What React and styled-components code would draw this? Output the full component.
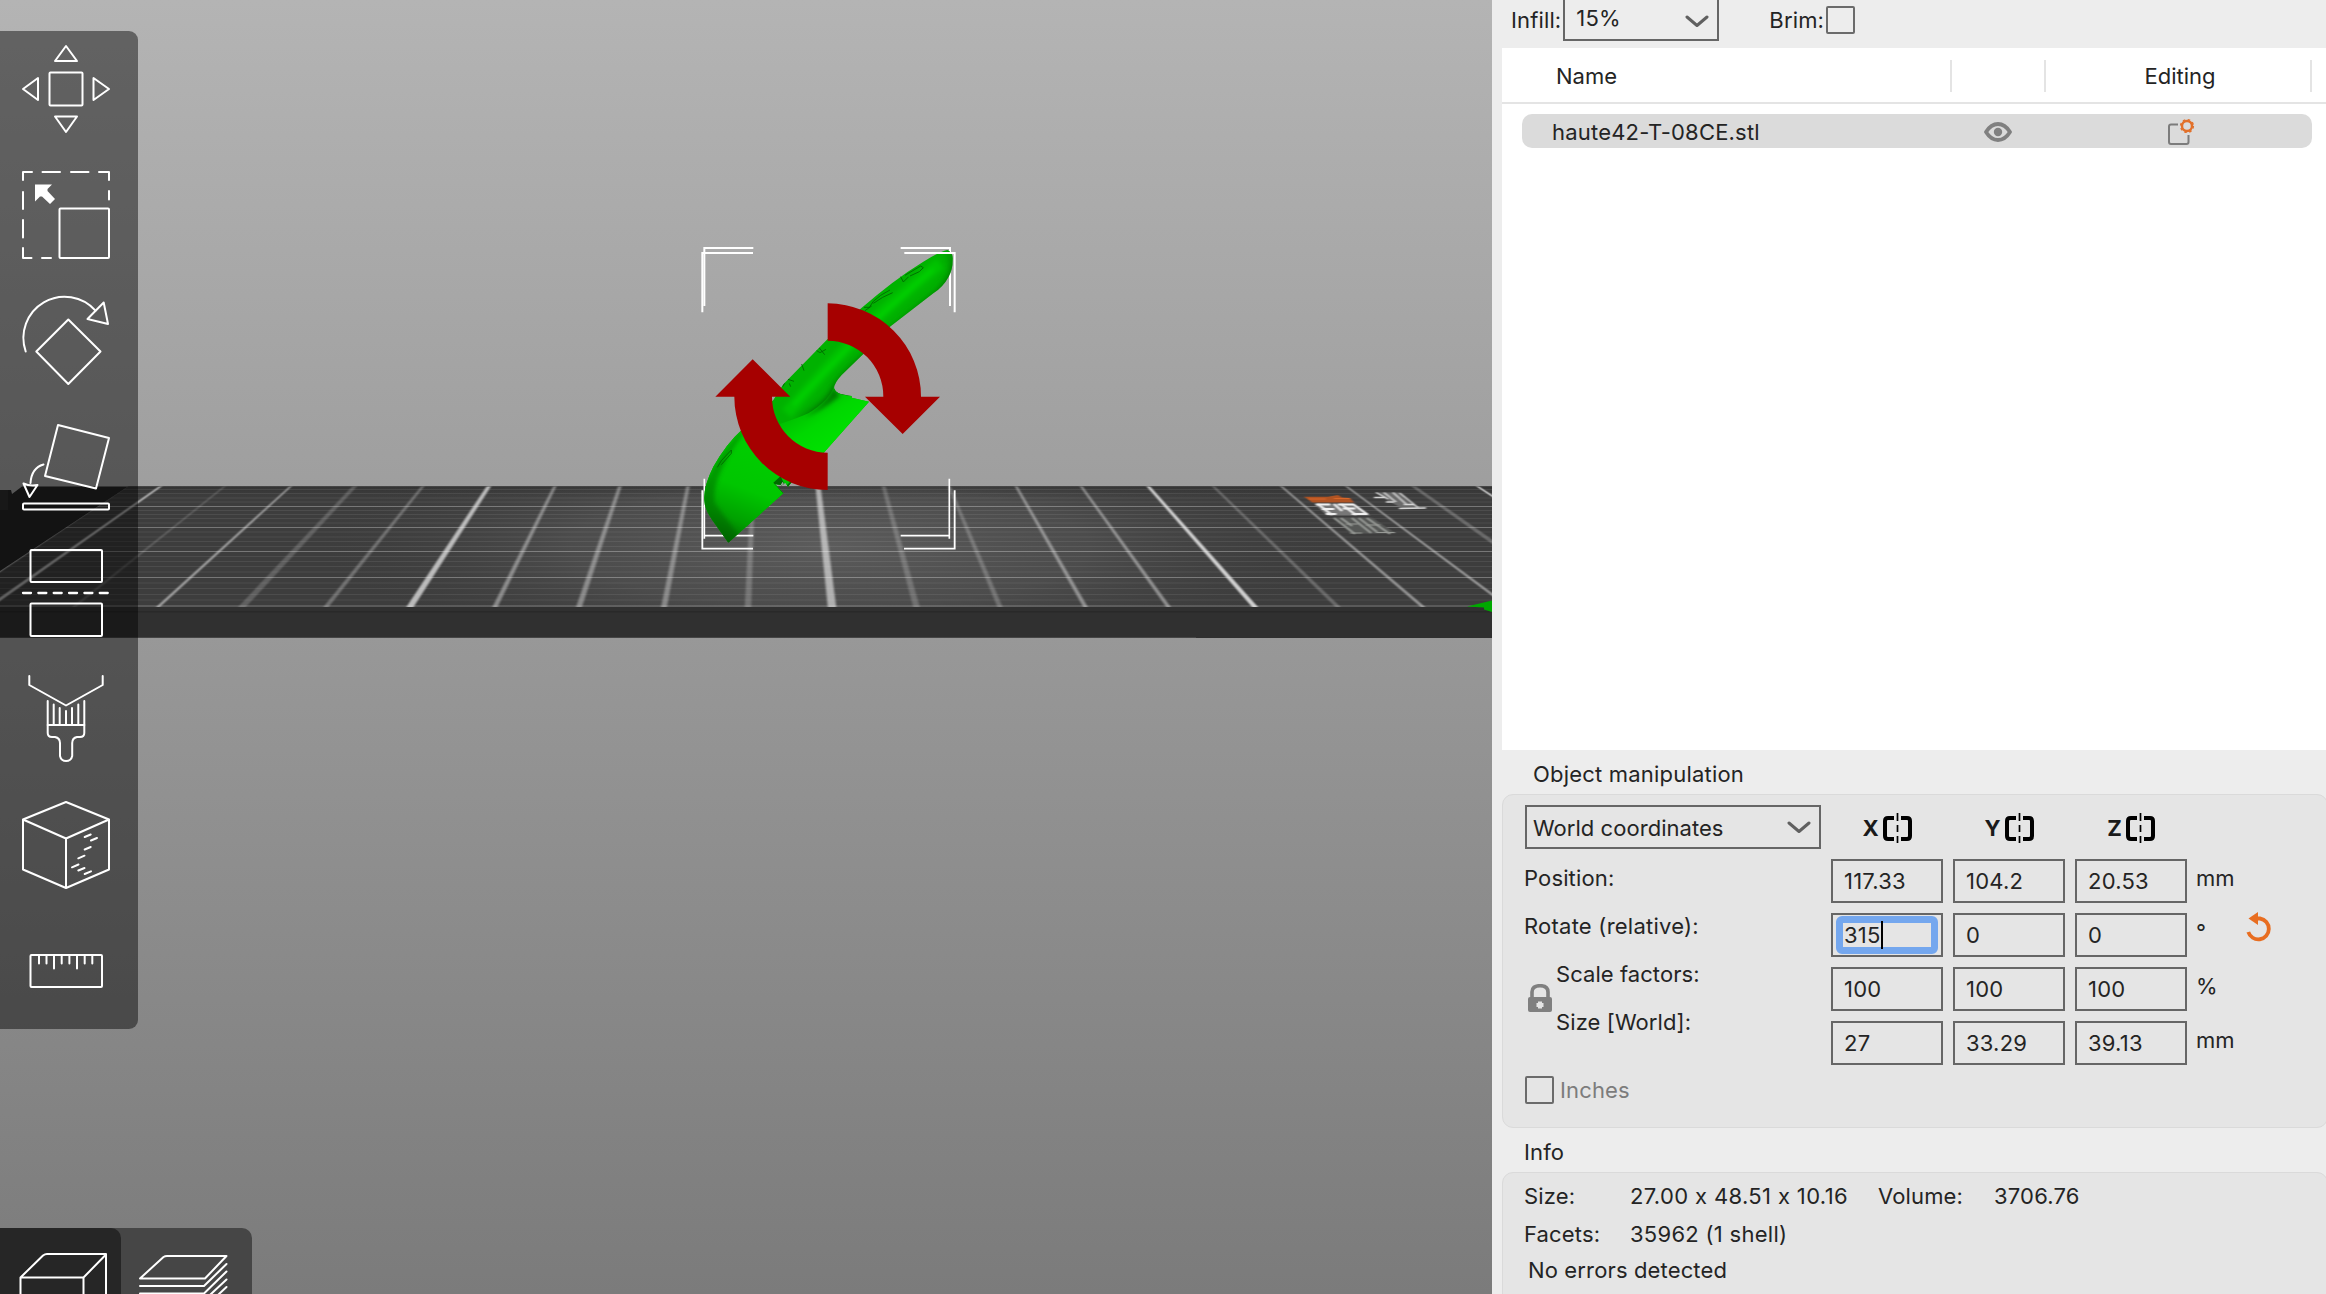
import React from "react";
import styled, { createGlobalStyle, css } from "styled-components";

const Global = createGlobalStyle`
  *, *::before, *::after { box-sizing: border-box; }
  html, body { margin: 0; padding: 0; background: #ededed; }
  body { font-family: Inter, "Liberation Sans", sans-serif; font-size: 22px; line-height: 28px; color: #242424; overflow: hidden; font-feature-settings: "calt" 0; }
`;

const Window = styled.div`
  display: flex;
  width: 2326px;
  height: 1294px;
  overflow: hidden;
`;

/* ---------- 3D viewport ---------- */

const Viewport = styled.section`
  position: relative;
  width: 1492px;
  height: 1294px;
  flex: none;
  background: linear-gradient(#b4b4b4, #7b7b7b);
`;

const SceneSvg = styled.svg`
  display: block;
  width: 1492px;
  height: 1294px;
`;

const Toolbar = styled.nav`
  position: absolute;
  left: 0;
  top: 31px;
  width: 138px;
  height: 998px;
  padding: 14px 0 0 22px;
  display: flex;
  flex-direction: column;
  gap: 38px;
  background: rgba(0, 0, 0, 0.45);
  border-radius: 0 9px 9px 0;
`;

const ToolIcon = styled.svg`
  display: block;
  flex: none;
  width: 88px;
  height: 88px;
  overflow: visible;
  fill: none;
  stroke: #fff;
  stroke-width: 2;
  stroke-linecap: round;
  stroke-linejoin: round;
`;

const ViewTabs = styled.nav`
  position: absolute;
  left: 0;
  top: 1228px;
  width: 252px;
  height: 66px;
  display: flex;
  overflow: hidden;
  background: #464646;
  border-radius: 0 10px 0 0;
`;

const ViewTab = styled.div`
  width: ${(p) => (p.$active ? 121 : 131)}px;
  height: 66px;
  border-radius: 0 10px 0 0;
  background: ${(p) => (p.$active ? "#262626" : "transparent")};
  svg {
    display: block;
    fill: none;
    stroke: #fff;
    stroke-width: 2;
    stroke-linecap: round;
    stroke-linejoin: round;
  }
`;

const mainLines = [
  [127, -53, 2, 0.6], [161, -11, 4, 0.58], [225, 74, 3, 0.16], [291, 158, 3, 0.48],
  [355, 242, 6, 0.18], [423, 326, 4, 0.26], [489, 410, 5.5, 0.64], [555, 495, 4, 0.38],
  [620, 579, 4.5, 0.36], [688, 664, 4.5, 0.34], [753, 748, 5, 0.22], [818, 832, 6.5, 0.55],
  [883.5, 916.5, 5, 0.2], [949, 1000, 4, 0.22], [1016, 1085.5, 3.5, 0.4],
  [1081, 1168.5, 3.5, 0.4], [1148, 1255, 4.5, 0.74], [1213, 1338, 4, 0.22],
  [1281, 1423, 3.5, 0.42], [1346, 1509, 3.5, 0.42], [1413, 1585, 6, 0.22], [1477, 1660, 3, 0.85],
];

const crossLines = [506.5, 527.5, 551.5, 577.5, 606];
const faintLines = [
  489.5, 493.5, 498, 502, 510.5, 514.5, 518.5, 523, 532, 537, 541.5, 546.5,
  556.5, 561.5, 566.5, 572, 583, 588.5, 594.5, 600,
];

function Bed() {
  return (
    <g>
      <polygon points="0,490 11,490 12,494 22,486.5 1492,486.5 1492,638 0,638" fill="#232323" />
      <rect x="0" y="490" width="8" height="20" fill="#2c2c2c" />
      <g clipPath="url(#bedClip)">
        <rect x="0" y="486" width="1492" height="121" fill="#3d3d3d" />
        <rect x="0" y="486" width="1492" height="121" fill="url(#bedGlow)" />
        <rect x="0" y="486" width="1492" height="12" fill="url(#farEdge)" />
        {faintLines.map((y) => (
          <line key={y} x1="0" x2="1492" y1={y} y2={y} stroke="#fff" strokeOpacity="0.08" strokeWidth="1.2" />
        ))}
        {crossLines.map((y) => (
          <line key={y} x1="0" x2="1492" y1={y} y2={y} stroke="#fff" strokeOpacity="0.3" strokeWidth="1.1" />
        ))}
        {mainLines.map(([a, b, w, o]) => (
          <polygon
            key={a}
            filter="url(#soft)"
            points={`${a - w * 0.4},486 ${a + w * 0.4},486 ${b + w * 0.65},607 ${b - w * 0.65},607`}
            fill="#fff"
            fillOpacity={o}
          />
        ))}
      </g>
      <rect x="0" y="607" width="1492" height="31" fill="#303030" />
      <rect x="0" y="611" width="1492" height="1.5" fill="#292929" />
      <rect x="0" y="637" width="1196" height="1" fill="#464646" />
      <g filter="url(#tiny)">
        <path d="M1304 496.800H1328L1338 495L1342 497.500L1350 498L1354 502.500H1312L1309 500Z" fill="#b05223" />
        <path d="M1308 499H1326M1334 498.500H1350" stroke="#d9672b" strokeWidth="1.200" />
        <path d="M1314 503.500H1354L1370 515.500H1327Z" fill="#777" />
        <g stroke="#f0f0f0" strokeWidth="2">
          <path d="M1316 504.500H1330M1338 504.500H1353M1322 509H1334M1343 508.500H1355M1326 514H1336M1352 514H1368" />
          <path d="M1318 504L1332 515M1334 504L1342 511M1341 504L1356 515M1353 504L1367 514" />
        </g>
        <path d="M1333 517.500H1372L1396 533.500H1351Z" fill="#565856" />
        <g stroke="#979a96" strokeWidth="1.600">
          <path d="M1334 518L1355 534M1341 518L1352 526M1352 518L1371 533M1359 518L1377 532M1367 518L1390 534" />
          <path d="M1350 533H1362M1376 532.500H1395M1346 524H1358M1366 525H1380" strokeWidth="1.200" />
        </g>
        <path d="M1376 492.500H1400L1409 502L1421 508.500H1403L1388 501Z" fill="#6a6a6a" />
        <g stroke="#d4d4d4" strokeWidth="1.400">
          <path d="M1376 492.500L1388 499M1384 492.500L1396 502M1393 492.500L1406 504M1400 493L1418 507.500M1399 508.500L1426 508M1374 497.500H1384M1386 502H1394M1404 504.500H1414" />
        </g>
      </g>
      <path d="M1467 606.500L1492 600.500V612L1484 609.500V607.500Z" fill="#00a900" />
    </g>
  );
}

function Model() {
  return (
    <g transform="translate(660 220) scale(0.33333)">
      <g fill="none" stroke="#fff" strokeWidth="6">
        <path d="M280 84H133V258" />
        <path d="M722 84H870V258" />
        <path d="M133 776V956M133 947H280" strokeWidth="5" />
        <path d="M868 776V956M868 947H722" strokeWidth="5" />
      </g>
      <g clipPath="url(#modelClip)">
        <rect x="100" y="60" width="800" height="920" fill="#00b200" />
        <g filter="url(#blur14)" fill="none">
          <path d="M905 130Q890 184 852 228L702 350L622 428Q550 490 532 528L460 600" stroke="#004d00" strokeWidth="38" />
          <path d="M530 520Q480 565 420 606" stroke="#007800" strokeWidth="16" />
          <path d="M864 88Q889 110 879 170" stroke="#006a00" strokeWidth="12" />
        </g>
        <g filter="url(#blur8)" fill="none">
          <path d="M840 130Q740 210 645 295L510 435L380 580" stroke="#00c200" strokeWidth="36" />
          <path d="M820 148Q710 240 610 335L490 460L400 555" stroke="#08d608" strokeWidth="8" />
        </g>
        <path d="M522 498Q528 525 575 528L640 545L490 720L380 680L360 612Q420 592 445 580Q510 540 522 498Z" fill="url(#fin)" />
        <path d="M520 500Q500 550 432 592Q480 575 540 528Z" fill="#007c00" filter="url(#blur8)" />
        <path d="M100 1000V620L245 620L300 700L400 790L370 822L205 980Z" fill="url(#head)" />
        <path d="M245 630Q150 740 133 800L120 860L205 980L240 950L165 850Q150 780 250 640Z" fill="#005500" fillOpacity="0.400" filter="url(#blur8)" />
        <path d="M340 788L362 768L376 800L396 780L400 800L378 830Z" fill="#006a00" />
        <path d="M362 795L368 785L374 798Z" fill="#a0a0a0" />
      </g>
      <g fill="none" stroke="#006400" strokeWidth="3" strokeOpacity="0.850">
        <path d="M722 170L730 186L746 170M735 166L782 138L790 143L778 155L750 168" />
        <path d="M612 262L628 262L640 244L662 226L690 210M640 250L668 232L698 218M615 272L635 258" />
        <path d="M470 392L480 398L498 388M478 384L494 404M425 432L432 452M384 478L402 484M388 490L392 500M368 500L374 490" />
        <path d="M172 742L184 722L214 690L214 700L184 734" />
      </g>
      <g fill="#a60000">
        <path d="M503 250A280 280 0 0 1 783 530H840L728 642L615 530H670A167 167 0 0 0 503 362Z" />
        <path d="M503 810A280 280 0 0 1 223 530H166L278 418L391 530H336A167 167 0 0 0 503 698Z" />
      </g>
      <g fill="none" stroke="#fff" strokeWidth="6">
        <path d="M279 99H127V277" />
        <path d="M733 99H884V277" />
        <path d="M127 811V986H279" strokeWidth="5.500" />
        <path d="M884 811V986H732" strokeWidth="5.500" />
      </g>
    </g>
  );
}

function Scene() {
  return (
    <SceneSvg viewBox="0 0 1492 1294">
      <defs>
        <clipPath id="bedClip">
          <polygon points="128,486.500 1492,486.500 1492,607 0,607 0,571" />
        </clipPath>
        <clipPath id="modelClip">
          <path d="M862 90Q880 98 878 120Q878 150 866 170Q850 200 820 220L690 320L610 402L545 465Q522 490 522 505Q528 520 545 523L575 528V533L627 545L490 700L400 780L384 800L376 788L366 796L345 792L370 820L205 968L155 898Q133 865 133 840Q130 800 160 740Q200 670 245 630L340 540L370 493L500 360L600 268Q700 180 790 125Q840 94 862 90Z" />
        </clipPath>
        <radialGradient id="bedGlow" gradientUnits="userSpaceOnUse" cx="0" cy="0" r="1" gradientTransform="translate(830 546) scale(520 120)">
          <stop offset="0" stopColor="#5c5c5c" />
          <stop offset="0.500" stopColor="#565656" stopOpacity="0.600" />
          <stop offset="1" stopColor="#3d3d3d" stopOpacity="0" />
        </radialGradient>
        <linearGradient id="farEdge" x1="0" y1="0" x2="0" y2="1">
          <stop offset="0" stopColor="#222" stopOpacity="0.400" />
          <stop offset="1" stopColor="#333" stopOpacity="0" />
        </linearGradient>
        <linearGradient id="fin" gradientUnits="userSpaceOnUse" x1="420" y1="560" x2="500" y2="680">
          <stop offset="0" stopColor="#00bd00" />
          <stop offset="0.500" stopColor="#00d800" />
          <stop offset="1" stopColor="#00e000" />
        </linearGradient>
        <linearGradient id="head" gradientUnits="userSpaceOnUse" x1="290" y1="700" x2="190" y2="960">
          <stop offset="0" stopColor="#00cc00" />
          <stop offset="0.400" stopColor="#00c600" />
          <stop offset="0.750" stopColor="#00a000" />
          <stop offset="1" stopColor="#006c00" />
        </linearGradient>
        <filter id="soft" x="-20%" y="-5%" width="140%" height="110%">
          <feGaussianBlur stdDeviation="1 0" />
        </filter>
        <filter id="tiny"><feGaussianBlur stdDeviation="0.900 0.450" /></filter>
        <filter id="blur14" x="-30%" y="-30%" width="160%" height="160%"><feGaussianBlur stdDeviation="13" /></filter>
        <filter id="blur8" x="-30%" y="-30%" width="160%" height="160%"><feGaussianBlur stdDeviation="6" /></filter>
      </defs>
      <Bed />
      <Model />
    </SceneSvg>
  );
}

const MoveIcon = () => (
  <ToolIcon viewBox="0 0 88 88">
    <path d="M44 1L55 16H33ZM44 87L33 71.500H55ZM1 44L16 33V55ZM87 44L71.500 33V55Z" />
    <rect x="27.500" y="27.500" width="33" height="33" rx="1" />
  </ToolIcon>
);

const ScaleIcon = () => (
  <ToolIcon viewBox="0 0 88 88">
    <path d="M1 9V1H10M20.500 1H38M49 1H66.500M77 1H87V9M87 20V28.500M1 21V38M1 49V66.500M1 77V87H9.500M20 87H29" />
    <rect x="37.500" y="37.500" width="49.500" height="49.500" rx="1" />
    <path d="M13 13.500H30L25.500 18V20L33 28L28 33L20 25.500H18L13 30.500Z" fill="#fff" stroke="none" />
  </ToolIcon>
);

const RotateIcon = () => (
  <ToolIcon viewBox="0 0 88 88">
    <path d="M3.700 54.500A41.200 41.200 0 0 1 73.500 13.700" />
    <path d="M81.700 5.500L65.500 22L86 27ZM46.300 22.500L78.500 54.500L46.300 87L14.300 54.500Z" />
  </ToolIcon>
);

const PlaceIcon = () => (
  <ToolIcon viewBox="0 0 88 88">
    <path d="M36 2L87 15L74 65.500L23 53ZM21.500 41.500Q9.500 45 8.500 60M1.500 60.500Q8 63.500 15.500 62L7.500 74Z" />
    <rect x="1" y="80.500" width="86" height="6" rx="1" />
  </ToolIcon>
);

const CutIcon = () => (
  <ToolIcon viewBox="0 0 88 88">
    <rect x="8.500" y="1" width="71.500" height="32" rx="1" />
    <rect x="8.500" y="54.500" width="71.500" height="32.500" rx="1" />
    <path d="M1 44H87" strokeWidth="2.300" strokeDasharray="8 7.350" />
  </ToolIcon>
);

const PaintIcon = () => (
  <ToolIcon viewBox="0 0 88 88">
    <path d="M7.300 1V10L44 30.500L80.700 10V1" />
    <path d="M31.700 29.500V49M37.700 33V49M44 36V49M50 33V49M56.300 29.500V49M25.700 50H62.300" />
    <path d="M25.700 26V58Q25.700 62 30 62H33Q38 63 38 68V81A6.200 6.200 0 0 0 50.200 81V68Q50.200 63 55 62H58Q62.300 62 62.300 58V26" />
  </ToolIcon>
);

const SeamIcon = () => (
  <ToolIcon viewBox="0 0 88 88">
    <path d="M44 1L87 18.500V68.500L44 87L1 68.500V18.500ZM1 18.500L44 37.500L87 18.500M44 37.500V87" />
    <path d="M62.700 36L68.700 33.500M69 39.500L75 37M62.700 48.500L68.700 46M56.300 57.300L62.500 54.700M50 66.300L56.500 63.500M56.300 69.500L62.500 67M62.700 73L69 70.300" />
  </ToolIcon>
);

const MeasureIcon = () => (
  <ToolIcon viewBox="0 0 88 88">
    <rect x="8.500" y="28" width="71.500" height="32" rx="1" />
    <path d="M17 28V36.500M24.500 28V36.500M32 28V41.500M39.700 28V36.500M47.400 28V36.500M55 28V41.500M62.700 28V36.500M70.300 28V36.500" />
  </ToolIcon>
);

/* ---------- side panel ---------- */

const Panel = styled.aside`
  width: 834px;
  height: 1294px;
  padding-left: 10px;
  display: flex;
  flex-direction: column;
  background: #ededed;
`;

const Label = styled.span`
  white-space: pre;
  letter-spacing: ${(p) => p.$track ?? 0.14}px;
  ${(p) => p.$w && css`width: ${p.$w}px;`}
  ${(p) => p.$muted && css`color: #7c7c7c;`}
`;

const OptionsBar = styled.div`
  display: flex;
  align-items: flex-start;
  height: 48px;
  padding: 6px 0 0 9px;
  flex: none;
`;

const Combo = styled.div`
  display: flex;
  align-items: center;
  justify-content: space-between;
  height: 44px;
  width: ${(p) => p.$w}px;
  padding: 1px 8px 0 ${(p) => p.$pad}px;
  border: 2px solid #666;
  color: #242424;
`;

const InfillCombo = styled(Combo)`
  margin: -9px 50px 0 2px;
  padding-top: 0;
  padding-bottom: 2px;
  svg { margin-top: 6px; }
`;

const Chevron = () => (
  <svg width="24" height="13" viewBox="0 0 24 13" fill="none" stroke="#606060" strokeWidth="3" strokeLinecap="round" strokeLinejoin="round">
    <path d="M2 2L12 10.500L22 2" />
  </svg>
);

const CheckBox = styled.span`
  width: 29px;
  height: 28px;
  flex: none;
  border: 2px solid #6b6b6b;
  border-radius: 2px;
`;

const BrimCheckBox = styled(CheckBox)`
  margin-left: 2px;
`;

const ObjectList = styled.div`
  height: 702px;
  flex: none;
  background: #fff;
`;

const ListHeader = styled.div`
  display: grid;
  grid-template-columns: 450px 94px 266px;
  align-items: center;
  height: 56px;
  border-bottom: 2px solid #e4e4e4;
`;

const HeaderCell = styled.div`
  height: 32px;
  margin-top: 1px;
  padding-top: 2px;
  padding-left: ${(p) => p.$pad || 0}px;
  text-align: ${(p) => p.$align || "left"};
  border-right: 2px solid #e4e4e4;
`;

const ListRow = styled.div`
  display: grid;
  grid-template-columns: 432px 183px 1fr;
  align-items: center;
  height: 34px;
  margin: 10px 14px 0 20px;
  padding: 2px 0 0 30px;
  background: #dbdbdb;
  border-radius: 10px;
  svg { display: block; }
`;

const SectionTitle = styled.div`
  height: 44px;
  flex: none;
  padding: 10px 0 0 ${(p) => p.$pad}px;
`;

const Group = styled.div`
  flex: none;
  width: 826px;
  border: 1px solid #dadada;
  border-radius: 11px;
  background: #e5e5e5;
`;

const ManipGroup = styled(Group)`
  display: flex;
  height: 334px;
  padding: 10px 0 0 22px;
`;

const LabelColumn = styled.div`
  width: 306px;
  display: flex;
  flex-direction: column;
`;

const LabelRow = styled.div`
  height: 48px;
  line-height: 48px;
`;

const LabelStack = styled.div`
  margin: 5px 0 0 -1px;
`;

const LockedPair = styled.div`
  display: flex;
  align-items: center;
  gap: 4px;
  padding-left: 4px;
  svg { display: block; }
`;

const InchesRow = styled.div`
  display: flex;
  align-items: center;
  gap: 6px;
  height: 28px;
  margin: 30px 0 0 0;
`;

const FieldGrid = styled.div`
  display: grid;
  grid-template-columns: 112px 112px 112px 39px 26px;
  grid-auto-rows: 44px;
  column-gap: 10px;
  row-gap: 10px;
  align-content: start;
`;

const AxisHead = styled.div`
  display: flex;
  align-items: center;
  justify-content: center;
  gap: 4px;
  line-height: 44px;
  padding-top: 1px;
  color: #1a1a1a;
  font-weight: 700;
`;

const Field = styled.div`
  height: 44px;
  padding-left: 11px;
  border: 2px solid #666;
  line-height: 40px;
  letter-spacing: 0.22px;
  white-space: pre;
`;

const FocusedField = styled(Field)`
  padding: 1px 3px;
`;

const FocusRing = styled.div`
  display: flex;
  align-items: center;
  height: 38px;
  padding: 0 0 1px 1px;
  border: 7px solid #74a7ee;
  border-radius: 6px;
`;

const Caret = styled.span`
  width: 2px;
  height: 28px;
  background: #000;
`;

const Unit = styled.div`
  line-height: 38px;
  margin-left: -1px;
`;

const UndoSlot = styled.div`
  svg { display: block; margin-top: -1px; }
`;

const InfoGroup = styled(Group)`
  height: 140px;
  padding: 8px 0 0 21px;
`;

const InfoRow = styled.div`
  display: flex;
  height: ${(p) => p.$h || 37.5}px;
  line-height: 30px;
  padding-left: ${(p) => p.$pad || 0}px;
`;

const EyeIcon = () => (
  <svg width="28" height="20" viewBox="0 0 28 20" fill="none">
    <path d="M2 10Q7 2 14 2T26 10Q21 18 14 18T2 10Z" stroke="#808080" strokeWidth="3.800" strokeLinejoin="round" />
    <circle cx="14" cy="10" r="4.200" fill="#808080" />
  </svg>
);

const EditIcon = () => (
  <svg width="28" height="28" viewBox="0 0 28 28" fill="none">
    <path d="M11 6.500H4Q2 6.500 2 8.500V24Q2 26 4 26H19.500Q21.500 26 21.500 24V17" stroke="#7c7c7c" strokeWidth="2" />
    <circle cx="20" cy="8" r="5" stroke="#e2702a" strokeWidth="2.400" />
    <circle cx="20" cy="8" r="6.400" stroke="#e2702a" strokeWidth="1.400" strokeDasharray="2.500 2.526" />
  </svg>
);

const MirrorIcon = () => (
  <svg width="29" height="30" viewBox="0 0 29 30" fill="none" stroke="#000">
    <path d="M11 5H5Q2 5 2 8V23Q2 26 5 26H11M18 5H24Q27 5 27 8V23Q27 26 24 26H18" strokeWidth="4" />
    <path d="M14.500 0V8M14.500 12V19M14.500 23V30" strokeWidth="1.700" />
  </svg>
);

const LockIcon = () => (
  <svg width="24" height="28" viewBox="0 0 24 28">
    <path d="M4 15V8Q4 1.700 12 1.700T20 8V15" fill="none" stroke="#808080" strokeWidth="3.600" />
    <rect x="0" y="13" width="24" height="15" rx="2" fill="#808080" />
    <path d="M12 17.500V24.500M8.500 21H15.500" stroke="#e5e5e5" strokeWidth="4" />
  </svg>
);

const UndoIcon = () => (
  <svg width="26" height="31" viewBox="0 0 26 31" fill="none">
    <path d="M8 6.500H14A10.500 10.500 0 1 1 2.300 20" stroke="#e86d20" strokeWidth="3.800" />
    <path d="M12 0V13L2.500 6.500Z" fill="#e86d20" />
  </svg>
);

function Fields({ values }) {
  return values.map((v, i) => <Field key={i}>{v}</Field>);
}

export default function App() {
  return (
    <>
      <Global />
      <Window>
        <Viewport>
          <Scene />
          <Toolbar>
            <MoveIcon />
            <ScaleIcon />
            <RotateIcon />
            <PlaceIcon />
            <CutIcon />
            <PaintIcon />
            <SeamIcon />
            <MeasureIcon />
          </Toolbar>
          <ViewTabs>
            <ViewTab $active>
              <svg width="121" height="66" viewBox="0 0 121 66">
                <path d="M20.500 70V49.500L43 27.500Q45 26 47 26H106V70M20.500 49.500H83.500V70M83.500 49.500L106 26.500" />
              </svg>
            </ViewTab>
            <ViewTab>
              <svg width="131" height="66" viewBox="0 0 131 66">
                <path d="M19 50.500L42.500 29Q44 28 46 28H105.500L84 50.500Z" />
                <path d="M19 58H83L105.500 36M19 65.500H83L105.500 43.500M82 73.500L105.500 51.500M82 81L105.500 59" />
              </svg>
            </ViewTab>
          </ViewTabs>
        </Viewport>

        <Panel>
          <OptionsBar>
            <Label>Infill:</Label>
            <InfillCombo $w={156} $pad={11}>
              <Label>15%</Label>
              <Chevron />
            </InfillCombo>
            <Label>Brim:</Label>
            <BrimCheckBox />
          </OptionsBar>

          <ObjectList>
            <ListHeader>
              <HeaderCell $pad={54}>Name</HeaderCell>
              <HeaderCell />
              <HeaderCell $align="center" $pad={4}>Editing</HeaderCell>
            </ListHeader>
            <ListRow>
              <Label $track={0.2}>haute42-T-08CE.stl</Label>
              <EyeIcon />
              <EditIcon />
            </ListRow>
          </ObjectList>

          <SectionTitle $pad={31}><Label $track={0.2}>Object manipulation</Label></SectionTitle>
          <ManipGroup>
            <LabelColumn>
              <Combo $w={296} $pad={6}>
                <Label $track={0.04}>World coordinates</Label>
                <Chevron />
              </Combo>
              <LabelStack>
                <LabelRow><Label>Position:</Label></LabelRow>
                <LabelRow><Label $track={0.24}>Rotate (relative):</Label></LabelRow>
                <LockedPair>
                  <LockIcon />
                  <div>
                    <LabelRow><Label $track={0.06}>Scale factors:</Label></LabelRow>
                    <LabelRow><Label $track={0.1}>Size [World]:</Label></LabelRow>
                  </div>
                </LockedPair>
              </LabelStack>
              <InchesRow>
                <CheckBox />
                <Label $muted>Inches</Label>
              </InchesRow>
            </LabelColumn>
            <FieldGrid>
              <AxisHead>X<MirrorIcon /></AxisHead>
              <AxisHead>Y<MirrorIcon /></AxisHead>
              <AxisHead>Z<MirrorIcon /></AxisHead>
              <span />
              <span />

              <Fields values={["117.33", "104.2", "20.53"]} />
              <Unit>mm</Unit>
              <span />

              <FocusedField>
                <FocusRing>315<Caret /></FocusRing>
              </FocusedField>
              <Fields values={["0", "0"]} />
              <Unit>°</Unit>
              <UndoSlot><UndoIcon /></UndoSlot>

              <Fields values={["100", "100", "100"]} />
              <Unit>%</Unit>
              <span />

              <Fields values={["27", "33.29", "39.13"]} />
              <Unit>mm</Unit>
              <span />
            </FieldGrid>
          </ManipGroup>

          <SectionTitle $pad={22}><Label>Info</Label></SectionTitle>
          <InfoGroup>
            <InfoRow>
              <Label $w={106}>Size:</Label>
              <Label $w={248} $track={0.36}>27.00 x 48.51 x 10.16</Label>
              <Label $w={116}>Volume:</Label>
              <Label $track={0.2}>3706.76</Label>
            </InfoRow>
            <InfoRow $h={36}>
              <Label $w={106}>Facets:</Label>
              <Label $track={0.28}>35962 (1 shell)</Label>
            </InfoRow>
            <InfoRow $pad={4}>
              <Label>No errors detected</Label>
            </InfoRow>
          </InfoGroup>
        </Panel>
      </Window>
    </>
  );
}
